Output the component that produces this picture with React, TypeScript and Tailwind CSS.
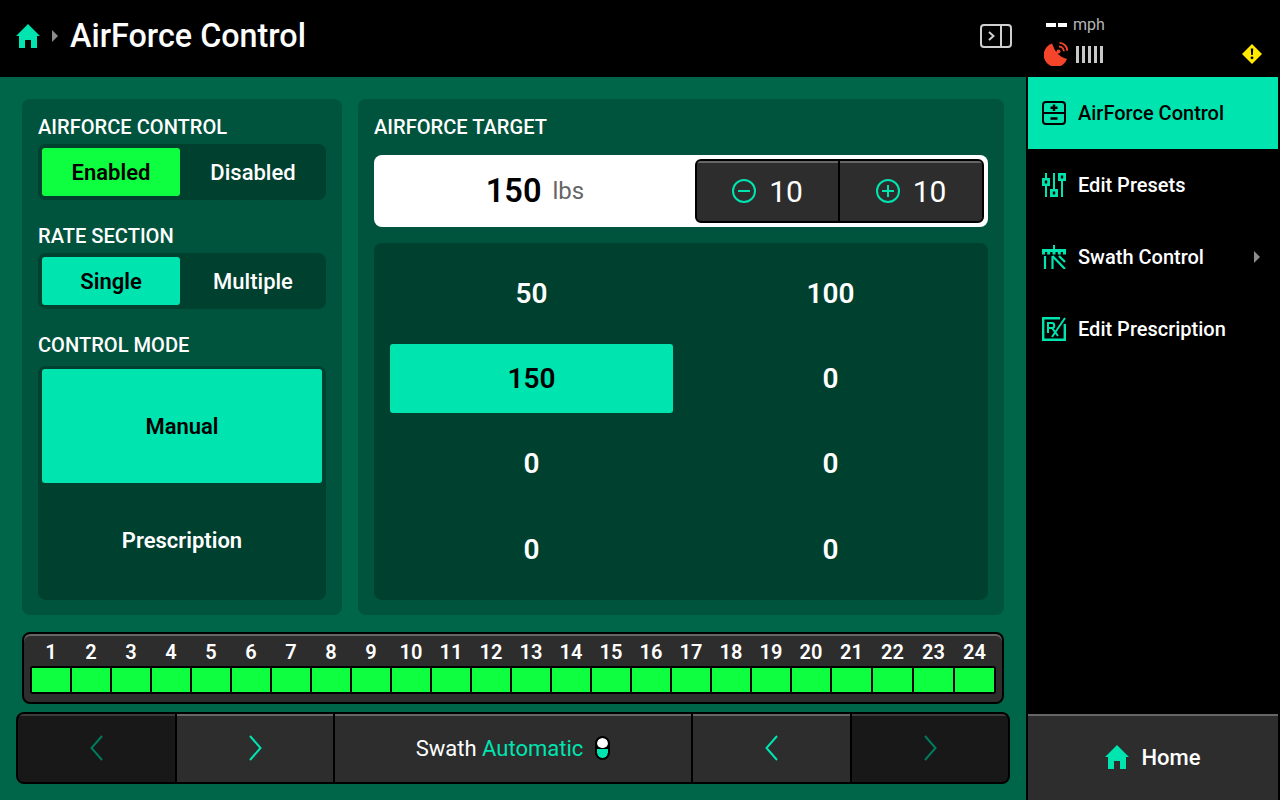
import React from 'react';

const FONT = "font-['Roboto',sans-serif]";
const ACCENT = '#00e4b0';
// last channels are a hair wider, same template for labels and lamps
const CHANNEL_COLS = 'grid-cols-[repeat(20,38px)_repeat(4,39px)]';

const HomeIcon = ({ className }: { className: string }) => (
  <svg viewBox="0 0 24 24" className={className} fill={ACCENT}>
    <path d="M12 0 L24 12 L21 12 L21 24 L15 24 L15 16 L9 16 L9 24 L3 24 L3 12 L0 12 Z" />
  </svg>
);

const Caret = ({ className }: { className: string }) => (
  <svg viewBox="0 0 6 12" className={className} fill="#8c8c8c">
    <path d="M0 0 L6 6 L0 12 Z" />
  </svg>
);

const Chevron = ({ dir, dim }: { dir: 'left' | 'right'; dim?: boolean }) => (
  <svg width="13" height="26" viewBox="0 0 13 26" fill="none" stroke={dim ? '#007a5c' : ACCENT} strokeWidth="2">
    <path d={dir === 'left' ? 'M12 1 L1.5 13 L12 25' : 'M1 1 L11.5 13 L1 25'} />
  </svg>
);

const Segment = ({ active, activeClass, label }: { active: boolean; activeClass: string; label: string }) => (
  <div
    className={`flex h-full items-center justify-center rounded-[3px] text-[22px] ${
      active ? `${activeClass} w-[138px] font-semibold text-black` : 'flex-1 font-medium text-white'
    }`}
  >
    {label}
  </div>
);

const PanelLabel = ({ children }: { children: React.ReactNode }) => (
  <div className="h-6 text-[20.1px] leading-6 font-medium text-white">{children}</div>
);

const Stepper = ({ plus }: { plus?: boolean }) => (
  <div className={`flex items-center justify-center gap-[13px] border-t-2 border-[#666] bg-[#2d2d2d] pb-[2px] text-[30px] text-white ${plus ? 'flex-1' : 'w-[141px]'}`}>
    <svg width="24" height="24" viewBox="0 0 24 24" fill="none" stroke={ACCENT} strokeWidth="2">
      <circle cx="12" cy="12" r="11" />
      <path d={plus ? 'M6 12 H18 M12 6 V18' : 'M6 12 H18'} />
    </svg>
    10
  </div>
);

const PresetCell = ({ value, active, low }: { value: number; active?: boolean; low?: boolean }) => (
  <div
    className={`flex h-[69px] items-center justify-center rounded-[3px] text-[28px] font-semibold ${
      active ? 'bg-[#00e4b0] text-black' : 'text-white'
    } ${low ? 'pt-[2px]' : ''}`}
  >
    {value}
  </div>
);

const NavButton = ({ dir, dim, className }: { dir: 'left' | 'right'; dim?: boolean; className: string }) => (
  <div
    className={`flex items-center justify-center border-t-2 pb-[2px] ${
      dim ? 'border-[#3c3c3c] bg-[#181818]' : 'border-[#666] bg-[#2d2d2d]'
    } ${className}`}
  >
    <Chevron dir={dir} dim={dim} />
  </div>
);

const MenuItem = ({ icon, label, active, more }: { icon: React.ReactNode; label: string; active?: boolean; more?: boolean }) => (
  <div
    className={`flex h-[72px] items-center gap-3 pl-[14px] pr-[18px] text-[20px] font-medium ${
      active ? 'bg-[#00e4b0] text-black' : 'text-white'
    }`}
  >
    {icon}
    <span className="flex-1">{label}</span>
    {more && <Caret className="h-3 w-[6px]" />}
  </div>
);

const channels = Array.from({ length: 24 }, (_, i) => i + 1);
const presets = [50, 100, 150, 0, 0, 0, 0, 0];

export default function App() {
  return (
    <div className={`flex h-[800px] w-[1280px] overflow-hidden bg-black ${FONT}`}>
      <div className="flex w-[1026px] flex-col">
        <header className="flex h-[77px] items-center bg-black pr-[14px] pb-[5px] pl-4">
          <HomeIcon className="h-6 w-6" />
          <Caret className="ml-3 h-3 w-[6px]" />
          <h1 className="ml-3 flex-1 text-[32.3px] font-medium text-white">AirForce Control</h1>
          <svg width="32" height="24" viewBox="0 0 32 24" fill="none" stroke="#cfcfcf" strokeWidth="2">
            <rect x="1" y="1" width="30" height="22" rx="3" />
            <path d="M21 1 V23 M9 8 L13.5 12 L9 16" />
          </svg>
        </header>

        <main className="flex flex-1 flex-col bg-[#00664a] pt-[22px] pb-4">
          <div className="flex gap-4 px-[22px]">
            <section className="flex h-[516px] w-[320px] flex-col rounded-lg bg-[#00533c] px-4 pt-4">
              <PanelLabel>AIRFORCE CONTROL</PanelLabel>
              <div className="mt-[5px] flex h-14 rounded-lg bg-[#00402f] py-1 pl-1">
                <Segment active activeClass="bg-[#0dff3f]" label="Enabled" />
                <Segment active={false} activeClass="" label="Disabled" />
              </div>
              <div className="mt-6">
                <PanelLabel>RATE SECTION</PanelLabel>
              </div>
              <div className="mt-[5px] flex h-14 rounded-lg bg-[#00402f] py-1 pl-1">
                <Segment active activeClass="bg-[#00e4b0]" label="Single" />
                <Segment active={false} activeClass="" label="Multiple" />
              </div>
              <div className="mt-6">
                <PanelLabel>CONTROL MODE</PanelLabel>
              </div>
              <div className="mt-[9px] flex h-[234px] flex-col rounded-lg bg-[#00402f] p-1 pt-[3px] text-[22px] font-semibold">
                <div className="flex h-[114px] items-center justify-center rounded-[3px] bg-[#00e4b0] pt-[2px] text-black">Manual</div>
                <div className="flex h-[114px] items-center justify-center pt-[2px] text-white">Prescription</div>
              </div>
            </section>

            <section className="flex h-[516px] flex-1 flex-col rounded-lg bg-[#00533c] px-4 pt-4">
              <PanelLabel>AIRFORCE TARGET</PanelLabel>
              <div className="mt-4 flex h-[72px] items-center rounded-lg bg-white p-1">
                <div className="flex flex-1 items-center justify-center gap-[11px] pr-[3px]">
                  <span className="text-[32.5px] font-semibold text-black">150</span>
                  <span className="text-[24px] text-[#666]">lbs</span>
                </div>
                <div className="flex h-16 w-[289px] gap-[2px] overflow-hidden rounded-md border-2 border-black bg-black">
                  <Stepper />
                  <Stepper plus />
                </div>
              </div>
              <div className="mt-4 grid h-[357px] grid-cols-2 gap-4 rounded-lg bg-[#00402f] p-4">
                {presets.map((value, i) => (
                  <PresetCell key={i} value={value} active={i === 2} low={i > 5} />
                ))}
              </div>
            </section>
          </div>

          <div className="mx-[22px] mt-[17px] h-[72px] rounded-lg border-2 border-black bg-[#2d2d2d] px-[6px] shadow-[inset_0_2px_0_#666]">
            <div className={`grid h-[32px] items-end gap-[2px] px-[2px] ${CHANNEL_COLS}`}>
              {channels.map((n) => (
                <div key={n} className="text-center text-[20px] leading-[28px] font-semibold text-white">
                  {n}
                </div>
              ))}
            </div>
            <div className={`grid h-[28px] gap-[2px] rounded-[3px] border-2 border-black bg-black ${CHANNEL_COLS}`}>
              {channels.map((n) => (
                <div key={n} className="bg-[#0dff3f]" />
              ))}
            </div>
          </div>

          <div className="mx-4 mt-2 flex h-[72px] gap-[2px] overflow-hidden rounded-lg border-2 border-black bg-black">
            <NavButton dir="left" dim className="w-[157px]" />
            <NavButton dir="right" className="w-[156px]" />
            <div className="flex flex-1 items-center justify-center gap-3 border-t-2 border-[#666] bg-[#2d2d2d] pb-[2px] text-[22px] text-white">
              <span>
                Swath <span className="text-[#00e4b0]">Automatic</span>
              </span>
              <div className="flex h-6 w-[15px] flex-col gap-px overflow-hidden rounded-full border-2 border-black bg-black">
                <div className="h-[10px] shrink-0 rounded-full bg-white" />
                <div className="flex-1 rounded-b-full bg-[#00e4b0]" />
              </div>
            </div>
            <NavButton dir="left" className="w-[157px]" />
            <NavButton dir="right" dim className="w-[156px]" />
          </div>
        </main>
      </div>

      <aside className="flex w-[254px] flex-col bg-black px-[2px]">
        <div className="relative h-[77px]">
          <div className="flex items-center pt-[17px] pl-[18px] text-[16px] leading-4 text-[#b5b5b5]">
            <span className="mr-[2px] h-1 w-[10px] bg-white" />
            <span className="mr-[6px] h-1 w-[9px] bg-white" />
            mph
          </div>
          <div className="mt-[9px] flex items-center pl-[16px]">
            <svg width="24" height="24" viewBox="0 0 24 24">
              <path fill="#f4452b" d="M8 1.5 A12 12 0 1 0 23 17 Q12.5 15 8 1.5 Z" />
              <path fill="none" stroke="#f4452b" strokeWidth="1.8" d="M11 13 L15 9 M15 4.5 A4.8 4.8 0 0 1 19.8 9.3 M15.5 0.9 A8 8 0 0 1 23.3 8.7" />
              <circle cx="14.5" cy="9.5" r="2" fill="#f4452b" />
            </svg>
            <div className="ml-2 flex h-[17px] gap-[3px]">
              <span className="w-[3px] bg-[#c8c8c8]" />
              <span className="w-[3px] bg-[#c8c8c8]" />
              <span className="w-[3px] bg-[#c8c8c8]" />
              <span className="w-[3px] bg-[#c8c8c8]" />
              <span className="w-[3px] bg-[#c8c8c8]" />
            </div>
          </div>
          {/* warning badge sits in the status corner */}
          <svg className="absolute top-[44px] left-[214px]" width="20" height="20" viewBox="0 0 20 20">
            <path fill="#ffea00" d="M10 0 L20 10 L10 20 L0 10 Z" />
            <path fill="#000" d="M8.8 4.5 H11.2 L10.8 11 H9.2 Z" />
            <circle cx="10" cy="13.8" r="1.4" fill="#000" />
          </svg>
        </div>

        <MenuItem
          active
          label="AirForce Control"
          icon={
            <svg width="24" height="24" viewBox="0 0 24 24" fill="none" stroke="#000" strokeWidth="2">
              <rect x="1" y="1" width="22" height="22" rx="3" />
              <path d="M1 12 H23" />
              <path d="M8.5 6.8 H15.5 M12 3.5 V10 M8.5 17.5 H15.5" strokeWidth="2.4" />
            </svg>
          }
        />
        <MenuItem
          label="Edit Presets"
          icon={
            <svg width="24" height="24" viewBox="0 0 24 24" fill="none" stroke={ACCENT} strokeWidth="2">
              <path d="M4 0 V5 M4 13 V24 M12 0 V16 M20 8 V24" />
              <path
                fill={ACCENT}
                stroke="none"
                fillRule="evenodd"
                d="M0 5 H8 V13 H0 Z M2.8 7.5 V10.5 H5.2 V7.5 Z M8 16 H16 V24 H8 Z M10.8 18.5 V21.5 H13.2 V18.5 Z M16 0 H24 V8 H16 Z M18.8 2.5 V5.5 H21.2 V2.5 Z"
              />
            </svg>
          }
        />
        <MenuItem
          more
          label="Swath Control"
          icon={
            <svg width="24" height="24" viewBox="0 0 24 24" fill="none" stroke={ACCENT} strokeWidth="2">
              <path d="M0 4 H24 V7 H0 Z" fill={ACCENT} stroke="none" />
              <path d="M12 0 V4" />
              <path d="M1.5 7 V9.5 M6.7 7 V9.5 M12 7 V9.5 M17.3 7 V9.5 M22.5 7 V9.5" strokeWidth="3" />
              <path d="M3 11 V24 M10.5 11 V24 M10.5 11 L23 24 M17 11 L23 17" strokeWidth="2.2" />
            </svg>
          }
        />
        <MenuItem
          label="Edit Prescription"
          icon={
            <svg width="24" height="24" viewBox="0 0 24 24" fill="none" stroke={ACCENT} strokeWidth="2.4">
              <path d="M18 1.2 H1.2 V22.8 H22.8 V7" />
              <path d="M6 16 V6 H10 C13 6 13 11 10 11 H6 M10 11 L16 19" strokeWidth="2" />
              <path d="M10 20 L23 1" strokeWidth="2" />
            </svg>
          }
        />

        <div className="mt-auto flex h-[86px] items-center justify-center gap-3 border-t-2 border-[#666] bg-[#2d2d2d] pb-[2px] text-[22px] font-medium text-white">
          <HomeIcon className="h-6 w-6" />
          Home
        </div>
      </aside>
    </div>
  );
}
